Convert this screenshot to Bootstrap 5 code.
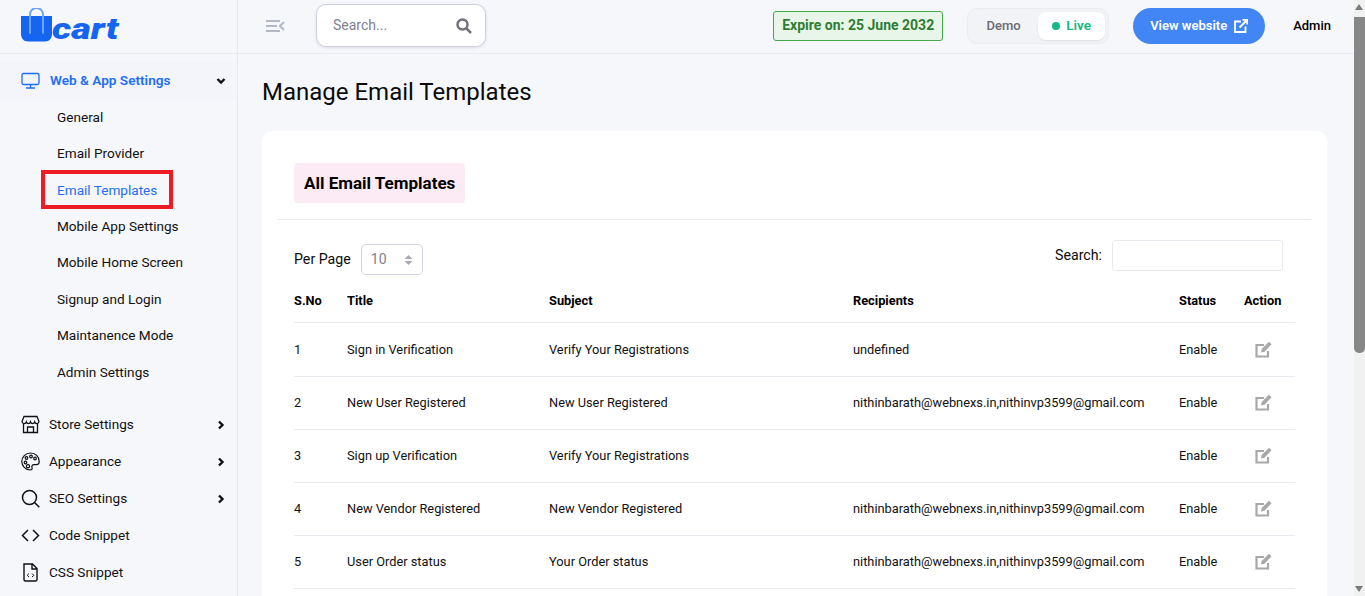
<!DOCTYPE html>
<html lang="en">
<head>
<meta charset="UTF-8" />
<meta name="viewport" content="width=device-width, initial-scale=1.0" />
<title>Manage Email Templates</title>
<link href="https://cdn.jsdelivr.net/npm/bootstrap@5.3.3/dist/css/bootstrap.min.css" rel="stylesheet" />
<script src="https://cdn.jsdelivr.net/npm/bootstrap@5.3.3/dist/js/bootstrap.bundle.min.js"></script>
<style>
  html, body { height: 100%; overflow: hidden; }
  body { font-family: Roboto, "Liberation Sans", sans-serif; font-size: 14px; color: #0b0b0b; background: #f6f7fb; }
  .app-shell { height: 596px; overflow: hidden; }
  .side-panel { width: 238px; flex: none; border-right: 1px solid #e9eaf0; height: 596px; overflow: hidden; font-size: 13.6px; }
  .logo-box { height: 54px; padding: 8px 0 0 21px; border-bottom: 1px solid #e9eaf0; }
  .logo-word { font-size: 29px; line-height: 29px; font-weight: 900; font-style: italic; color: #1565f0; margin: 7px 0 0 0; transform: scaleX(1.31); transform-origin: left center; }
  .menu-head { height: 37px; padding: 0 11px 0 21px; gap: 10px; margin-top: 8px; background: #f3f5fa; color: #1f6ef5; font-weight: 600; }
  .menu-item { height: 37px; padding: 0 11px 0 21px; gap: 9px; color: #111; text-decoration: none; }
  .menu-item svg.ico { width: 19px; height: 19px; flex: none; }
  .menu-item .arrow, .menu-head .arrow { margin-left: auto; width: 10px; height: 10px; }
  .sub-menu { margin-top: -.2px; padding: 0 0 16.2px; }
  .sub-link { display: flex; align-items: center; height: 36.4px; padding-left: 57px; color: #111; text-decoration: none; }
  .sub-active { color: #1f6ef5; position: relative; }
  .sub-active::after { content: ""; position: absolute; left: 41px; top: -2px; width: 132px; height: 39px; border: 4px solid #ed1c24; }
  .top-strip { height: 54px; border-bottom: 1px solid #e9eaf0; padding: 0 23px 2px 28px; }
  .search-pill { width: 170px; height: 43px; margin-left: 31px; padding: 0 13px 0 16px; background: #fff; border: 1px solid #cfd0e2; border-radius: 10px; color: #80808f; box-shadow: 0 1px 3px rgba(40,40,80,.12); }
  .expire-tag { height: 30px; padding: 0 8px; border: 1px solid #46a84d; border-radius: 3px; background: #e8f5e9; color: #2e7d32; font-weight: 700; margin-left: auto; }
  .mode-switch { height: 36px; margin-left: 24px; padding: 3px; width: 142px; background: #f2f3f6; border: 1px solid #ebecf0; border-radius: 10px; font-weight: 500; font-size: 13px; color: #6b6b73; }
  .mode-demo { width: 67px; text-align: center; padding-right: 2px; }
  .mode-live { flex: 1; height: 100%; padding-left: 14px; gap: 6px; background: #fff; border-radius: 8px; color: #10b981; font-size: 13.5px; font-weight: 600; box-shadow: 0 1px 2px rgba(0,0,0,.08); }
  .mode-dot { width: 8px; height: 8px; border-radius: 50%; background: #10b981; }
  .site-btn { height: 36px; width: 132px; margin-left: 24px; padding: 0; gap: 7px; border-radius: 18px; background: #4285f4; border: 0; color: #fff; font-size: 13px; font-weight: 600; }
  .admin-name { margin-left: 28px; font-weight: 500; font-size: 13px; color: #000; }
  .page-title { font-size: 24px; font-weight: 400; line-height: 28px; margin: 24px 0 25px 24px; color: #0b0b0b; }
  .white-panel { margin: 0 27px 0 24px; padding: 16px; height: 600px; background: #fff; border-radius: 10px; }
  .panel-top { padding: 16px; height: 73px; border-bottom: 1px solid #e9eaf0; }
  .pink-title { display: inline-block; height: 40px; padding: 0 10px; line-height: 40px; font-size: 17px; font-weight: 700; color: #000; background: #fcebf4; border-radius: 4px; }
  .tools-row { padding: 20px 28px 0 16px; height: 65px; }
  .per-label { font-size: 14.2px; margin-top: 4px; }
  .per-box { width: 62px; height: 31px; margin: 4px 0 0 10px; padding: 0 9px; border: 1px solid #d3d3e3; border-radius: 5px; color: #80808f; }
  .find-box { width: 171px; height: 31px; margin-left: 10px; border: 1px solid #e9eaf0; border-radius: 3px; }
  .find-label { font-size: 14.2px; }
  .mail-table { width: 1001px; margin: 0 0 0 16px; table-layout: fixed; font-size: 12.8px; color: #111; }
  .mail-table th { height: 37px; padding: 0 0 5px; font-size: 12.8px; font-weight: 700; color: #000; border-bottom: 1px solid #e9eaf0; vertical-align: middle; }
  .mail-table td { height: 53px; padding: 0; border-bottom: 1px solid #e9eaf0; vertical-align: middle; }
  .mail-table tr:first-child td { height: 54px; padding-top: 1px; }
  .edit-ico { width: 17px; height: 17px; margin-left: 11px; display: block; }
  .scroll-rail { width: 11px; flex: none; height: 596px; background: #f1f1f1; position: relative; }
  .scroll-thumb { position: absolute; left: 0; right: 0; top: 17px; height: 336px; background: #878787; border-radius: 0 0 5px 5px; }
  .scroll-up, .scroll-down { position: absolute; left: 1px; width: 0; height: 0; border-left: 4.5px solid transparent; border-right: 4.5px solid transparent; }
  .scroll-up { top: 4px; border-bottom: 6px solid #7a7a7a; }
  .scroll-down { bottom: 4px; border-top: 6px solid #7a7a7a; }
</style>
</head>
<body>
<div class="app-shell d-flex">
  <aside class="side-panel">
    <div class="logo-box d-flex align-items-start">
      <svg width="31" height="34" viewBox="0 0 31 34">
        <path d="M9 9V6.500a6.500 6.500 0 0 1 13 0V9" fill="none" stroke="#6ea4f7" stroke-width="2"/>
        <path d="M0 8h31v18c0 4-2.500 7.500-7 7.500H7c-4.500 0-7-3.500-7-7.500z" fill="#1565f0"/>
        <path d="M9 8v17M22 8v17" stroke="#6ea4f7" stroke-width="2" stroke-linecap="round"/>
      </svg>
      <div class="logo-word">cart</div>
    </div>
    <div class="menu-head d-flex align-items-center">
      <svg class="ico" width="19" height="19" viewBox="0 0 19 19" fill="none" stroke="#1f6ef5" stroke-width="1.300"><rect x="1" y="2.500" width="17" height="11" rx="1.500"/><path d="M9.500 13.500v3M5 17h9"/></svg>
      <span>Web &amp; App Settings</span>
      <svg class="arrow" viewBox="0 0 10 10" fill="none" stroke="#111" stroke-width="2.400"><path d="M1.500 3 5 6.500 8.500 3"/></svg>
    </div>
    <nav class="sub-menu">
      <a class="sub-link" href="#">General</a>
      <a class="sub-link" href="#">Email Provider</a>
      <a class="sub-link sub-active" href="#">Email Templates</a>
      <a class="sub-link" href="#">Mobile App Settings</a>
      <a class="sub-link" href="#">Mobile Home Screen</a>
      <a class="sub-link" href="#">Signup and Login</a>
      <a class="sub-link" href="#">Maintanence Mode</a>
      <a class="sub-link" href="#">Admin Settings</a>
    </nav>
    <a class="menu-item d-flex align-items-center" href="#">
      <svg class="ico" viewBox="0 0 19 19" fill="none" stroke="#111" stroke-width="1.300"><path d="M3 1.500h13l2 5a2.200 2.200 0 0 1-4.300.5 2.200 2.200 0 0 1-4.200 0 2.200 2.200 0 0 1-4.200 0A2.200 2.200 0 0 1 1 6.500zM2.500 9v8.500h14V9M6.500 17.500V12h6v5.500"/></svg>
      <span>Store Settings</span>
      <svg class="arrow" viewBox="0 0 10 10" fill="none" stroke="#111" stroke-width="2.400"><path d="M3 1.500 6.500 5 3 8.500"/></svg>
    </a>
    <a class="menu-item d-flex align-items-center" href="#">
      <svg class="ico" viewBox="0 0 19 19" fill="none" stroke="#111" stroke-width="1.200"><path d="M9.500 1C4.500 1 .8 5 .8 9.500s3.700 8.500 8.200 8.500c2 0 2.500-1.300 2-2.500-.6-1.500.3-2.800 2-2.800h2.500c1.700 0 2.700-1.200 2.700-3.200C18.200 4.500 14.500 1 9.500 1z"/><circle cx="5.500" cy="6" r="1.300"/><circle cx="10" cy="4.500" r="1.300"/><circle cx="14" cy="6.500" r="1.300"/><circle cx="4.500" cy="10.500" r="1.300"/><circle cx="7" cy="14.200" r="1.600"/></svg>
      <span>Appearance</span>
      <svg class="arrow" viewBox="0 0 10 10" fill="none" stroke="#111" stroke-width="2.400"><path d="M3 1.500 6.500 5 3 8.500"/></svg>
    </a>
    <a class="menu-item d-flex align-items-center" href="#">
      <svg class="ico" viewBox="0 0 19 19" fill="none" stroke="#111" stroke-width="1.500"><circle cx="8.500" cy="8.500" r="7"/><path d="m13.500 13.500 4.800 4.800"/></svg>
      <span>SEO Settings</span>
      <svg class="arrow" viewBox="0 0 10 10" fill="none" stroke="#111" stroke-width="2.400"><path d="M3 1.500 6.500 5 3 8.500"/></svg>
    </a>
    <a class="menu-item d-flex align-items-center" href="#">
      <svg class="ico" viewBox="0 0 19 19" fill="none" stroke="#111" stroke-width="1.500"><path d="M7 4 1.500 9.500 7 15M12 4l5.500 5.500L12 15"/></svg>
      <span>Code Snippet</span>
    </a>
    <a class="menu-item d-flex align-items-center" href="#">
      <svg class="ico" viewBox="0 0 19 19" fill="none" stroke="#111" stroke-width="1.400"><path d="M3 1h8.500L16 5.500V16.500a1.500 1.500 0 0 1-1.500 1.500h-10A1.500 1.500 0 0 1 3 16.500zM11 1v5h5"/><path d="m8 10.500-1.800 1.800L8 14M11 10.500l1.800 1.800L11 14" stroke-width="1"/></svg>
      <span>CSS Snippet</span>
    </a>
  </aside>

  <div class="flex-grow-1 overflow-hidden">
    <header class="top-strip d-flex align-items-center">
      <svg width="19" height="14" viewBox="0 0 19 14" fill="none" stroke="#b4b8c6" stroke-width="2"><path d="M0 2h14M0 7h11M0 12h14M18 3l-4 4 4 4" /></svg>
      <div class="search-pill d-flex align-items-center justify-content-between">
        <span>Search...</span>
        <svg width="16" height="16" viewBox="0 0 16 16" fill="none" stroke="#72727f" stroke-width="2.500"><circle cx="6.500" cy="6.500" r="5"/><path d="m10.500 10.500 4.500 4.500"/></svg>
      </div>
      <div class="expire-tag d-flex align-items-center">Expire on: 25 June 2032</div>
      <div class="mode-switch d-flex align-items-center">
        <div class="mode-demo">Demo</div>
        <div class="mode-live d-flex align-items-center"><span class="mode-dot"></span>Live</div>
      </div>
      <button class="btn site-btn d-flex align-items-center justify-content-center" type="button">View website
        <svg width="14" height="14" viewBox="0 0 14 14" fill="none" stroke="#fff" stroke-width="1.800"><path d="M7 2.500H1v10.500h10.500V7.500M5.500 8.500 13 1M8.500 .8h4.700v4.700"/></svg>
      </button>
      <div class="admin-name">Admin</div>
    </header>

    <h1 class="page-title">Manage Email Templates</h1>

    <section class="white-panel">
      <div class="panel-top"><span class="pink-title">All Email Templates</span></div>
      <div class="tools-row d-flex justify-content-between">
        <div class="d-flex align-items-center align-self-start">
          <span class="per-label">Per Page</span>
          <div class="per-box d-flex align-items-center justify-content-between">
            <span>10</span>
            <svg width="9" height="12" viewBox="0 0 9 12" fill="#a9a9b3"><path d="M4.500 1 8.500 5h-8zM4.500 11 .5 7h8z"/></svg>
          </div>
        </div>
        <div class="d-flex align-items-center align-self-start">
          <span class="find-label">Search:</span>
          <div class="find-box"></div>
        </div>
      </div>
      <table class="mail-table">
        <colgroup><col style="width:53px"><col style="width:202px"><col style="width:304px"><col style="width:326px"><col style="width:65px"><col style="width:51px"></colgroup>
        <thead>
          <tr><th>S.No</th><th>Title</th><th>Subject</th><th>Recipients</th><th>Status</th><th>Action</th></tr>
        </thead>
        <tbody id="mail-rows"></tbody>
      </table>
    </section>
  </div>

  <div class="scroll-rail">
    <span class="scroll-up"></span>
    <div class="scroll-thumb"></div>
    <span class="scroll-down"></span>
  </div>
</div>

<script>
  const rows = [
    ["1", "Sign in Verification", "Verify Your Registrations", "undefined"],
    ["2", "New User Registered", "New User Registered", "nithinbarath@webnexs.in,nithinvp3599@gmail.com"],
    ["3", "Sign up Verification", "Verify Your Registrations", ""],
    ["4", "New Vendor Registered", "New Vendor Registered", "nithinbarath@webnexs.in,nithinvp3599@gmail.com"],
    ["5", "User Order status", "Your Order status", "nithinbarath@webnexs.in,nithinvp3599@gmail.com"],
  ];
  const editIcon = `<svg class="edit-ico" viewBox="0 0 17 17" fill="none" stroke="#a8a8a8" stroke-width="2.200"><path d="M13 10v5.500H1.500V4H9"/><path d="M6 11.500l.7-3.500L14 .8l2.500 2.500L9.500 10.800z" fill="#a8a8a8" stroke="none"/></svg>`;
  document.getElementById("mail-rows").innerHTML = rows
    .map((x) => `<tr><td>${x[0]}</td><td>${x[1]}</td><td>${x[2]}</td><td>${x[3]}</td><td>Enable</td><td>${editIcon}</td></tr>`)
    .join("");
</script>
</body>
</html>
